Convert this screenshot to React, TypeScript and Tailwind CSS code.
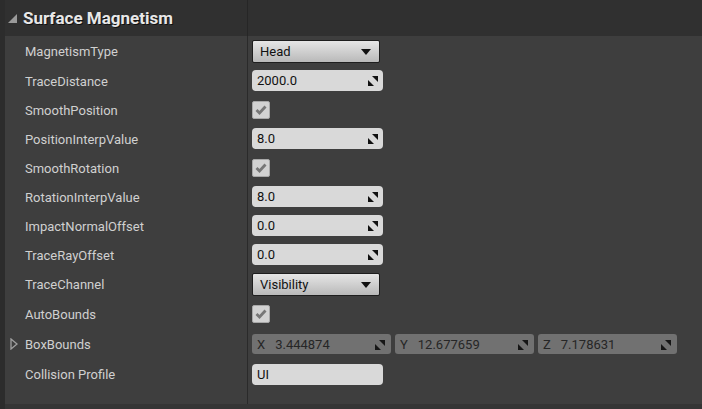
import React from "react";

const font = { fontFamily: "Roboto, 'Liberation Sans', sans-serif" };

function SpinIcon({ dark = "#111" }: { dark?: string }) {
  return (
    <svg width="10" height="10" viewBox="0 0 10 10">
      <polygon points="4,0 10,0 10,6" fill={dark} />
      <polygon points="0,4 0,10 6,10" fill={dark} />
    </svg>
  );
}

function NumberField({ value }: { value: string }) {
  return (
    <div className="flex h-[21px] w-[131px] items-center justify-between rounded-[4px] bg-[#d9d9d9] pl-[5px] pr-[5px] pt-[1px] text-[13px] text-[#111]">
      <span>{value}</span>
      <SpinIcon />
    </div>
  );
}

function Dropdown({ value }: { value: string }) {
  return (
    <div className="flex h-[23px] w-[128px] items-center justify-between rounded-[2px] border border-[#1e1e1e] bg-gradient-to-b from-[#e6e6e6] to-[#b9b9b9] pl-[7px] pr-[8px] pt-[1px] text-[13px] text-[#111]">
      <span>{value}</span>
      <svg width="10" height="6" viewBox="0 0 10 6">
        <polygon points="0,0 10,0 5,6" fill="#111" />
      </svg>
    </div>
  );
}

function Checkbox() {
  return (
    <div className="flex h-[18px] w-[18px] items-center justify-center rounded-[2px] border border-[#a8a8a8] bg-[#d2d2d2]">
      <svg width="12" height="10" viewBox="0 0 12 10">
        <polyline points="1.5,5 4.5,8 10.5,1.5" fill="none" stroke="#777777" strokeWidth="2.8" />
      </svg>
    </div>
  );
}

function VecField({ axis, value }: { axis: string; value: string }) {
  return (
    <div className="flex h-[20px] w-[139px] items-center justify-between rounded-[3px] bg-[#717171] pl-[5px] pr-[6px] pt-[1px] text-[13px] text-[#262626]">
      <span className="flex gap-[10px]">
        <span>{axis}</span>
        <span>{value}</span>
      </span>
      <SpinIcon dark="#161616" />
    </div>
  );
}

type Row = { label: string; h: number; value: React.ReactNode; arrow?: boolean };

const rows: Row[] = [
  { label: "MagnetismType", h: 30, value: <Dropdown value="Head" /> },
  { label: "TraceDistance", h: 29, value: <NumberField value="2000.0" /> },
  { label: "SmoothPosition", h: 29, value: <Checkbox /> },
  { label: "PositionInterpValue", h: 29, value: <NumberField value="8.0" /> },
  { label: "SmoothRotation", h: 29, value: <Checkbox /> },
  { label: "RotationInterpValue", h: 29, value: <NumberField value="8.0" /> },
  { label: "ImpactNormalOffset", h: 29, value: <NumberField value="0.0" /> },
  { label: "TraceRayOffset", h: 29, value: <NumberField value="0.0" /> },
  { label: "TraceChannel", h: 30, value: <Dropdown value="Visibility" /> },
  { label: "AutoBounds", h: 30, value: <Checkbox /> },
  {
    label: "BoxBounds",
    h: 30,
    arrow: true,
    value: (
      <div className="flex gap-[4px]">
        <VecField axis="X" value="3.444874" />
        <VecField axis="Y" value="12.677659" />
        <VecField axis="Z" value="7.178631" />
      </div>
    ),
  },
  {
    label: "Collision Profile",
    h: 30,
    value: (
      <div className="flex h-[21px] w-[131px] items-center rounded-[4px] bg-[#d9d9d9] pl-[5px] pt-[1px] text-[13px] text-[#111]">
        UI
      </div>
    ),
  },
];

export default function App() {
  return (
    <div className="flex h-[409px] w-[702px] overflow-hidden bg-[#3e3e3e]" style={font}>
      <div className="w-[5px] shrink-0 bg-[#2c2c2c]" />
      <div className="flex min-w-0 flex-1 flex-col">
        <div className="flex h-[36px] shrink-0 bg-[#303030]">
          <div className="flex w-[242px] items-center pl-[3px] pt-[1px]">
            <svg width="10" height="10" viewBox="0 0 10 10" className="mr-[5px] mt-[1px]">
              <polygon points="9,0 9,9 0,9" fill="#9a9a9a" />
            </svg>
            <span
              className="text-[17px] font-bold text-[#e8e8e8]"
              style={{ textShadow: "1px 1px 0 #111" }}
            >
              Surface Magnetism
            </span>
          </div>
          <div className="w-px bg-[#262626]" />
          <div className="flex-1" />
        </div>
        {rows.map((r) => (
          <div key={r.label} className="flex shrink-0" style={{ height: r.h }}>
            <div className="relative flex w-[242px] items-center pl-[20px] pt-[2px] text-[13px] text-[#d0d0d0]">
              {r.arrow && (
                <svg width="8" height="12" viewBox="0 0 8 12" className="absolute left-[5px] top-[9px]">
                  <polygon points="1,1 7,6 1,11" fill="none" stroke="#a0a0a0" strokeWidth="1.3" />
                </svg>
              )}
              {r.label}
            </div>
            <div className="w-px bg-[#2a2a2a]" />
            <div className="flex flex-1 items-center pl-[4px]">{r.value}</div>
          </div>
        ))}
        <div className="flex flex-1">
          <div className="w-[242px]" />
          <div className="w-px bg-[#2a2a2a]" />
          <div className="flex-1" />
        </div>
        <div className="h-[5px] shrink-0 bg-[#353535]" />
      </div>
    </div>
  );
}
